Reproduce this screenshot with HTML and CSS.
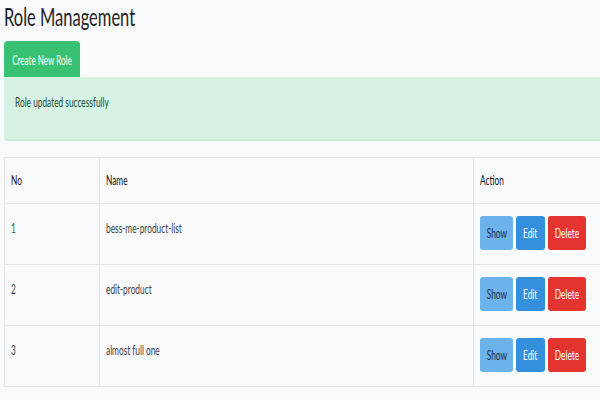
FILE: index.html
```html
<!DOCTYPE html>
<html>
<head>
<meta charset="utf-8">
<link rel="stylesheet" href="styles.css">
</head>
<body>
<div class="page">
  <h2 class="title"><span class="sq">Role Management</span></h2>
  <a class="btn btn-create"><span class="sq">Create New Role</span></a>
  <div class="alert"><span class="sq">Role updated successfully</span></div>
  <table class="roles">
    <colgroup><col class="c-no"><col class="c-name"><col class="c-act"></colgroup>
    <thead>
      <tr><th><span class="sq">No</span></th><th><span class="sq">Name</span></th><th><span class="sq">Action</span></th></tr>
    </thead>
    <tbody>
      <tr><td class="num"><span class="sq">1</span></td><td><span class="sq">bess-me-product-list</span></td><td class="acts"><a class="btn btn-show"><span class="sq">Show</span></a><a class="btn btn-edit"><span class="sq">Edit</span></a><a class="btn btn-del"><span class="sq">Delete</span></a></td></tr>
      <tr><td><span class="sq">2</span></td><td><span class="sq">edit-product</span></td><td class="acts"><a class="btn btn-show"><span class="sq">Show</span></a><a class="btn btn-edit"><span class="sq">Edit</span></a><a class="btn btn-del"><span class="sq">Delete</span></a></td></tr>
      <tr><td><span class="sq">3</span></td><td><span class="sq">almost full one</span></td><td class="acts"><a class="btn btn-show"><span class="sq">Show</span></a><a class="btn btn-edit"><span class="sq">Edit</span></a><a class="btn btn-del"><span class="sq">Delete</span></a></td></tr>
    </tbody>
  </table>
</div>
</body>
</html>
```
FILE: styles.css
```css
html, body {
  margin: 0;
  padding: 0;
  background: #f8fafc;
}
.page {
  padding: 0 0 0 4px;
  font-family: Lato, "Open Sans", sans-serif;
  color: #212529;
  white-space: nowrap;
}
.sq {
  display: inline-block;
  transform: scaleX(0.64);
  transform-origin: left center;
}
.title {
  margin: 0;
  height: 41px;
  font-size: 25px;
  font-weight: 400;
  line-height: 32px;
  color: #1e2226;
}
.title .sq { transform: scaleX(0.66); }
.btn {
  display: inline-flex;
  align-items: center;
  justify-content: center;
  text-decoration: none;
  font-size: 13px;
  border-radius: 3px;
  box-sizing: border-box;
  overflow: visible;
}
.btn .sq { transform-origin: center center; }
.btn-create {
  width: 76px;
  height: 36px;
  background: #38c172;
  color: #fff;
  border-radius: 4px 4px 0 0;
  font-size: 13px;
  padding-top: 1px;
}
.btn-create .sq { transform: scaleX(0.62); }
.alert {
  height: 64px;
  box-sizing: border-box;
  background: #d5f2e2;
  border-bottom: 2px solid #c6ecd7;
  color: #1d4b3a;
  font-size: 13px;
  padding: 17px 11px;
  margin-bottom: 16px;
  border-radius: 0 0 0 3px;
}
.roles {
  border-collapse: collapse;
  width: 100%;
  font-size: 13px;
}
.c-no { width: 95px; }
.c-name { width: 374px; }
.roles th, .roles td {
  border: 1px solid #e2e6ea;
  text-align: left;
  vertical-align: top;
  padding: 16px 6px 0;
  box-sizing: border-box;
}
.roles th:last-child, .roles td:last-child { border-right: none; }
.roles th {
  height: 46px;
  padding-top: 14px;
  font-weight: normal;
  color: #111;
}
.roles td {
  height: 61px;
  color: #3a3f44;
}
.roles td.num { color: #2b6a63; }
.roles td.acts {
  padding: 12px 6px 0;
}
.acts .btn {
  height: 34px;
  margin-right: 3px;
}
.btn-show { width: 33px; background: #6cb2eb; color: #1f2d3d; }
.btn-edit { width: 29px; background: #3490dc; color: #fff; }
.btn-del { width: 38px; background: #e3342f; color: #fff; }
```
